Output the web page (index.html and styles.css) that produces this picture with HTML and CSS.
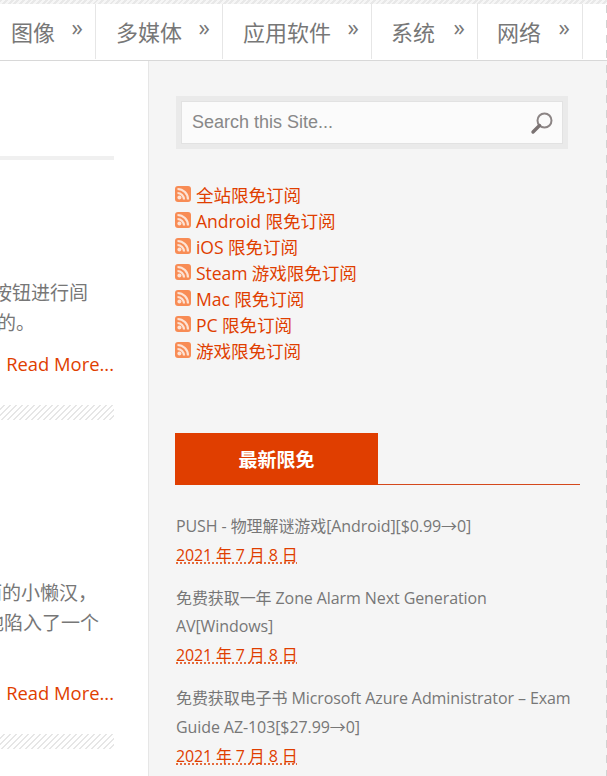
FILE: index.html
```html
<!DOCTYPE html>
<html lang="zh-CN">
<head>
  <meta charset="UTF-8">
  <title>限免订阅</title>
  <link rel="stylesheet" href="styles.css">
</head>
<body>
  <div class="top-strip"></div>

  <nav class="nav">
    <a class="nav-item first">图像<span class="arrow">»</span></a>
    <a class="nav-item">多媒体<span class="arrow">»</span></a>
    <a class="nav-item">应用软件<span class="arrow">»</span></a>
    <a class="nav-item">系统<span class="arrow">»</span></a>
    <a class="nav-item">网络<span class="arrow">»</span></a>
  </nav>

  <div class="page">
    <main class="main">
      <div class="title-rule"></div>

      <article class="post post-one">
        <p class="line cut-a">按钮进行闾</p>
        <p class="line cut-b">的。</p>
        <a class="more">Read More...</a>
        <div class="hatch"></div>
      </article>

      <article class="post post-two">
        <p class="line cut-c">而的小懒汉，</p>
        <p class="line cut-d">地陷入了一个</p>
        <a class="more">Read More...</a>
        <div class="hatch"></div>
      </article>
    </main>

    <aside class="sidebar">
      <form class="search">
        <div class="search-box">
          <input class="search-input" type="text" placeholder="Search this Site...">
          <svg class="search-icon" viewBox="0 0 24 24" width="24" height="24">
            <circle cx="14.5" cy="9.5" r="7" fill="none" stroke="#8c8585" stroke-width="2"/>
            <path d="M9.5 14.5 L3 21" stroke="#7a7272" stroke-width="3.4" stroke-linecap="round"/>
          </svg>
        </div>
      </form>

      <ul class="feeds">
        <li><svg class="rss" viewBox="0 0 16 16"><use href="#rss"/></svg>全站限免订阅</li>
        <li><svg class="rss" viewBox="0 0 16 16"><use href="#rss"/></svg>Android 限免订阅</li>
        <li><svg class="rss" viewBox="0 0 16 16"><use href="#rss"/></svg>iOS 限免订阅</li>
        <li><svg class="rss" viewBox="0 0 16 16"><use href="#rss"/></svg>Steam 游戏限免订阅</li>
        <li><svg class="rss" viewBox="0 0 16 16"><use href="#rss"/></svg>Mac 限免订阅</li>
        <li><svg class="rss" viewBox="0 0 16 16"><use href="#rss"/></svg>PC 限免订阅</li>
        <li><svg class="rss" viewBox="0 0 16 16"><use href="#rss"/></svg>游戏限免订阅</li>
      </ul>

      <h3 class="widget-title"><span>最新限免</span></h3>

      <ul class="recent">
        <li>
          <a>PUSH - 物理解谜游戏[Android][$0.99→0]</a>
          <time>2021 年 7 月 8 日</time>
        </li>
        <li>
          <a>免费获取一年 Zone Alarm Next Generation AV[Windows]</a>
          <time>2021 年 7 月 8 日</time>
        </li>
        <li>
          <a>免费获取电子书 Microsoft Azure Administrator – Exam Guide AZ-103[$27.99→0]</a>
          <time>2021 年 7 月 8 日</time>
        </li>
      </ul>
    </aside>
  </div>

  <svg class="defs" width="0" height="0">
    <symbol id="rss" viewBox="0 0 16 16">
      <rect width="16" height="16" rx="3" fill="#f88c55"/>
      <circle cx="4.4" cy="11.6" r="2" fill="#fde3d5"/>
      <path d="M2.5 7 A6.5 6.5 0 0 1 9 13.5" fill="none" stroke="#fde3d5" stroke-width="2.2"/>
      <path d="M2.5 3 A10.5 10.5 0 0 1 13 13.5" fill="none" stroke="#fde3d5" stroke-width="2.2"/>
    </symbol>
  </svg>
</body>
</html>
```

FILE: styles.css
```css
* {
  box-sizing: border-box;
}

body {
  position: relative;
  margin: 0;
  height: 776px;
  overflow: hidden;
  background: #fff;
  color: #777;
  font-family: "Open Sans", "Noto Sans CJK SC", sans-serif;
}

/* dashed page edge */
body::after {
  content: "";
  position: absolute;
  top: 5px;
  right: 0;
  width: 1px;
  bottom: 0;
  background: repeating-linear-gradient(180deg, #d2d2d2 0 8px, transparent 8px 15px);
}

.top-strip {
  height: 4px;
  background: repeating-linear-gradient(135deg, #e8e8e8 0 2px, #f6f6f6 2px 4px);
}

.nav {
  display: flex;
  height: 57px;
  padding-bottom: 1px;
  border-bottom: 1px solid #d8d8d8;
  background: #fff;
  font-size: 22px;
  line-height: 56px;
  white-space: nowrap;
}

.nav-item {
  display: flex;
  justify-content: space-between;
  width: 127px;
  padding: 0 12px 0 20px;
  border-right: 1px solid #e6e6e6;
  color: #777;
}

.nav-item.first {
  width: 96px;
  padding-left: 11px;
}

.nav-item:nth-child(3) {
  width: 149px;
}

.nav-item:nth-child(4) {
  width: 106px;
  padding-left: 19px;
}

.nav-item:nth-child(5) {
  width: 105px;
  padding-left: 19px;
}

.arrow {
  font-size: 23px;
  line-height: 46px;
}

.page {
  display: grid;
  grid-template-columns: 149px 1fr;
  height: 715px;
}

.main {
  overflow: hidden;
  padding-top: 95px;
  border-right: 1px solid #e6e6e6;
  background: #fff;
}

.title-rule {
  width: 114px;
  height: 4px;
  background: #f0f0f0;
}

.line {
  margin: 0;
  font-size: 19px;
  line-height: 30px;
  white-space: nowrap;
}

.cut-a {
  margin-left: -7px;
}

.cut-b {
  margin-left: -3px;
}

.cut-c {
  margin-left: -17px;
}

.cut-d {
  margin-left: -15px;
}

.post-one {
  padding-top: 118px;
}

.post-two {
  padding-top: 158px;
}

.more {
  display: block;
  width: 114px;
  margin-top: 11px;
  color: #e03e00;
  font-size: 18.4px;
  line-height: 30px;
  text-align: right;
  white-space: nowrap;
}

.post-two .more {
  margin-top: 40px;
}

.hatch {
  width: 114px;
  height: 15px;
  margin-top: 26px;
  background: repeating-linear-gradient(135deg, #fff 0 2.2px, #e6e6e6 2.2px 4.24px);
}

.sidebar {
  padding: 35px 27px 0 26px;
  background: #f5f5f5;
}

.search {
  margin: 0 0 0 1px;
  width: 392px;
  border: 5px solid #eaeaea;
}

.search-box {
  display: flex;
  align-items: center;
  height: 43px;
  padding: 0 8px 0 10px;
  border: 1px solid #e2e2e2;
  background: #fbfbfb;
}

.search-input {
  flex: 1;
  min-width: 0;
  padding: 0;
  border: none;
  outline: none;
  background: transparent;
  color: #888;
  font-family: "Liberation Sans", sans-serif;
  font-size: 18px;
}

.search-input::placeholder {
  color: #888;
  opacity: 1;
}

.search-icon {
  flex: none;
}

.feeds {
  margin: 32px 0 0;
  padding: 0;
  list-style: none;
}

.feeds li {
  display: flex;
  align-items: center;
  height: 26px;
  color: #e03e00;
  font-size: 17.6px;
  letter-spacing: -0.1px;
  white-space: pre;
}

.rss {
  flex: none;
  width: 16px;
  height: 16px;
  margin: -1px 5px 0 0;
}

.defs {
  position: absolute;
}

.widget-title {
  margin: 70px 0 0;
  width: 405px;
  height: 52px;
  border-bottom: 1px solid #d4481c;
  color: #fff;
  font-size: 19px;
  line-height: 54px;
}

.widget-title span {
  display: block;
  width: 203px;
  height: 52px;
  background: #e03e00;
  text-align: center;
}

.recent {
  margin: 27px 0 0 1px;
  padding: 0;
  list-style: none;
  font-size: 16px;
  line-height: 28.8px;
  letter-spacing: -0.09px;
}

.recent li {
  margin-bottom: 14px;
}

.recent a {
  display: block;
  color: #777;
}

.recent time {
  color: #e03e00;
  letter-spacing: -0.15px;
  text-decoration: underline dotted #e03e00;
  text-underline-offset: 2px;
}
```
